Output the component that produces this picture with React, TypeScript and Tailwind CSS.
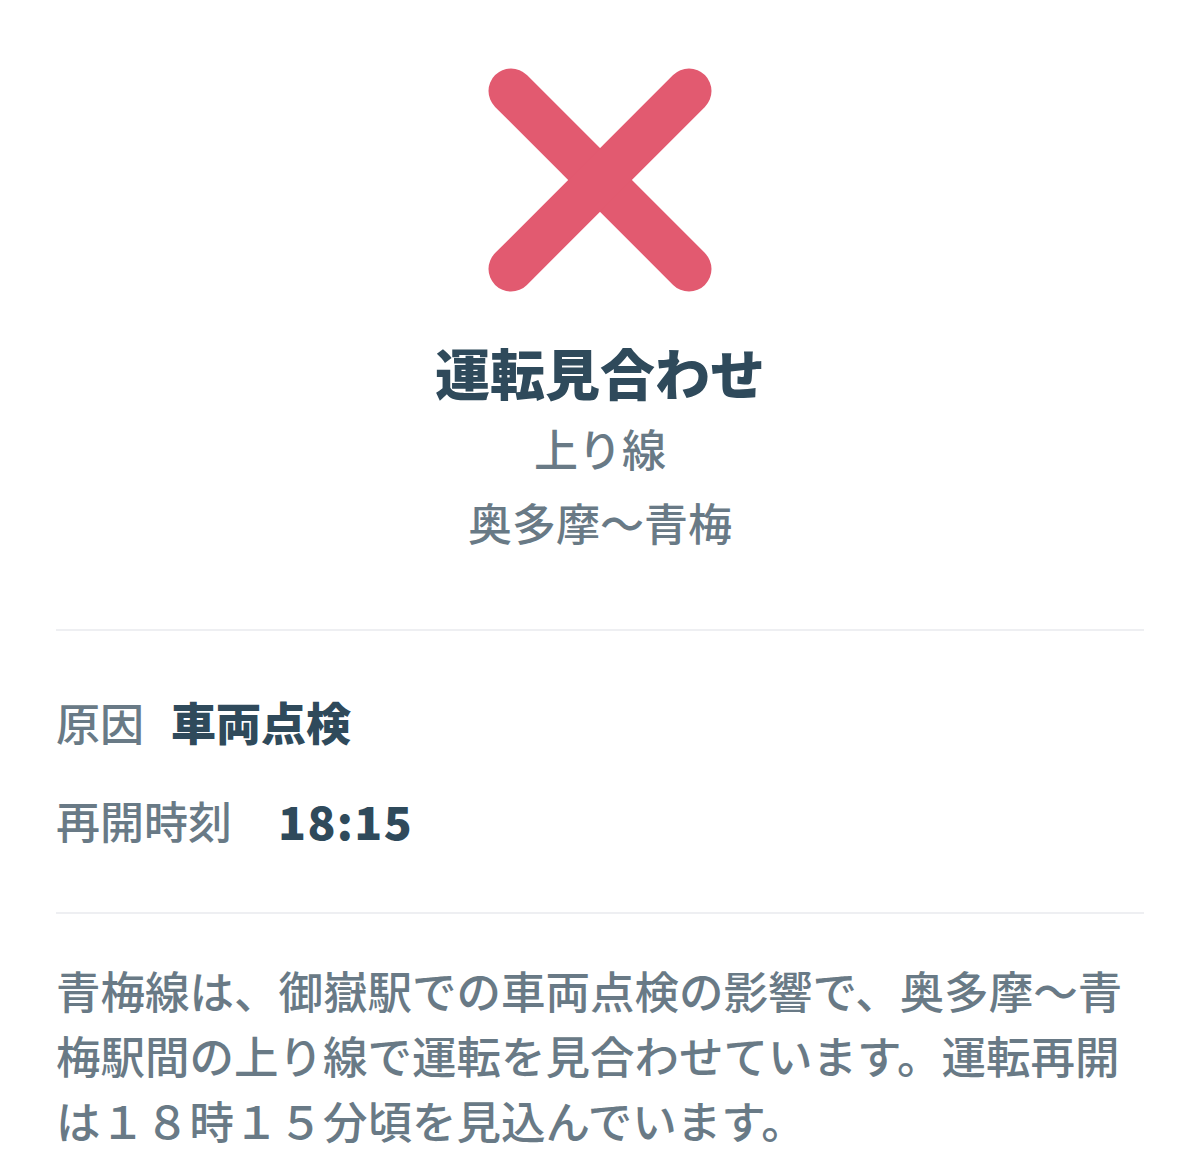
const font = { fontFamily: '"Noto Sans CJK JP", "Noto Sans", sans-serif' };

const CrossIcon = () => (
  <svg width="240" height="240" viewBox="0 0 240 240" className="block">
    <g stroke="#e25a70" strokeWidth="45" strokeLinecap="round">
      <line x1="31" y1="31" x2="209" y2="209" />
      <line x1="209" y1="31" x2="31" y2="209" />
    </g>
  </svg>
);

const App = () => {
  return (
    <div
      className="w-[1200px] h-[1168px] bg-white overflow-hidden px-[56px]"
      style={font}
    >
      {/* status header */}
      <div className="flex flex-col items-center pt-[60px]">
        <CrossIcon />
        <h1 className="mt-[38px] text-[55px] leading-[66px] font-black text-[#2f4a5b]">
          運転見合わせ
        </h1>
        <p className="mt-[7px] text-[44px] leading-[74px] font-medium text-[#697a86]">上り線</p>
        <p className="text-[44px] leading-[74px] font-medium text-[#697a86]">奥多摩〜青梅</p>
      </div>

      <div className="mt-[70px] h-[2px] bg-[#eeeff2]" />

      {/* details */}
      <div className="pt-[58px] pb-[59px] flex flex-col gap-[32px]">
        <div className="flex items-center h-[66px]">
          <span className="text-[44px] font-medium text-[#697a86]">原因</span>
          <span className="ml-[27px] text-[45px] font-black text-[#2f4a5b]">車両点検</span>
        </div>
        <div className="flex items-center h-[66px]">
          <span className="text-[44px] font-medium text-[#697a86]">再開時刻</span>
          <span className="ml-[46px] text-[46px] font-black tracking-[0.03em] text-[#2f4a5b]">
            18:15
          </span>
        </div>
      </div>

      <div className="h-[2px] bg-[#eeeff2]" />

      <p className="pt-[43px] text-[44.5px] leading-[65px] font-medium text-[#697a86]">
        青梅線は、御嶽駅での車両点検の影響で、奥多摩〜青梅駅間の上り線で運転を見合わせています。運転再開は１８時１５分頃を見込んでいます。
      </p>
    </div>
  );
};

export default App;
